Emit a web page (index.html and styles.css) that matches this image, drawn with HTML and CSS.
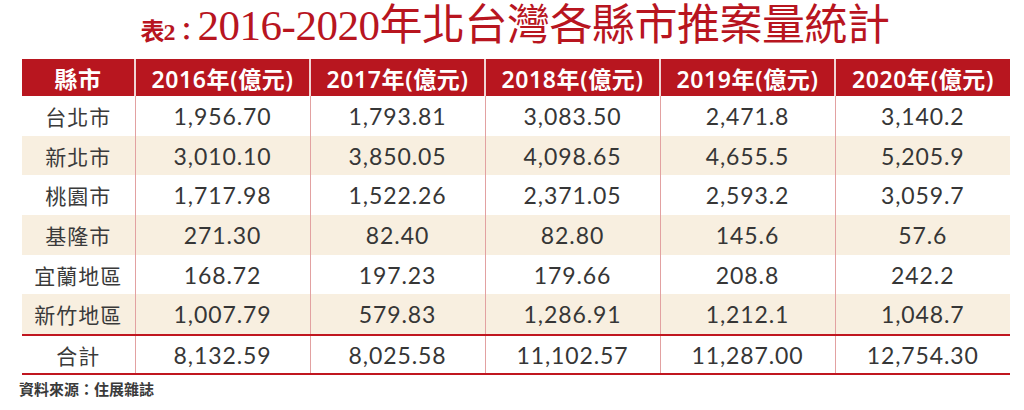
FILE: index.html
```html
<!DOCTYPE html>
<html lang="zh-Hant">
<head>
<meta charset="utf-8">
<title>表2：2016-2020年北台灣各縣市推案量統計</title>
<link rel="stylesheet" href="styles.css">
</head>
<body>
<h1 class="title"><span class="title-tag">表2：</span><span class="title-main">2016-2020年北台灣各縣市推案量統計</span></h1>
<table class="stats">
  <thead>
    <tr>
      <th class="col-name">縣市</th>
      <th>2016年(億元)</th>
      <th>2017年(億元)</th>
      <th>2018年(億元)</th>
      <th>2019年(億元)</th>
      <th>2020年(億元)</th>
    </tr>
  </thead>
  <tbody>
    <tr><td class="name">台北市</td><td>1,956.70</td><td>1,793.81</td><td>3,083.50</td><td>2,471.8</td><td>3,140.2</td></tr>
    <tr class="alt"><td class="name">新北市</td><td>3,010.10</td><td>3,850.05</td><td>4,098.65</td><td>4,655.5</td><td>5,205.9</td></tr>
    <tr><td class="name">桃園市</td><td>1,717.98</td><td>1,522.26</td><td>2,371.05</td><td>2,593.2</td><td>3,059.7</td></tr>
    <tr class="alt"><td class="name">基隆市</td><td>271.30</td><td>82.40</td><td>82.80</td><td>145.6</td><td>57.6</td></tr>
    <tr><td class="name">宜蘭地區</td><td>168.72</td><td>197.23</td><td>179.66</td><td>208.8</td><td>242.2</td></tr>
    <tr class="alt"><td class="name">新竹地區</td><td>1,007.79</td><td>579.83</td><td>1,286.91</td><td>1,212.1</td><td>1,048.7</td></tr>
  </tbody>
  <tfoot>
    <tr><td class="name">合計</td><td>8,132.59</td><td>8,025.58</td><td>11,102.57</td><td>11,287.00</td><td>12,754.30</td></tr>
  </tfoot>
</table>
<p class="source">資料來源：住展雜誌</p>
</body>
</html>
```

FILE: styles.css
```css
html, body {
  margin: 0;
  padding: 0;
  background: #ffffff;
}

body {
  width: 1024px;
  height: 410px;
  overflow: hidden;
  font-family: "Noto Sans", "Noto Sans CJK TC", sans-serif;
  color: #333333;
}

.title {
  margin: 0;
  height: 59px;
  display: flex;
  justify-content: center;
  align-items: baseline;
  padding-left: 6px;
  box-sizing: border-box;
  color: #b8151f;
  font-family: "Liberation Serif", "Noto Sans CJK TC", serif;
  font-weight: normal;
  line-height: 52px;
}

.title-tag {
  font-size: 24px;
  font-weight: bold;
  letter-spacing: -1px;
}

.title-main {
  font-size: 43px;
  letter-spacing: -0.5px;
}

.stats {
  margin-left: 22px;
  width: 988px;
  border-collapse: collapse;
  table-layout: fixed;
}

.stats th,
.stats td {
  padding: 0;
  text-align: center;
  white-space: nowrap;
}

.stats th {
  height: 37px;
  background: #b8161f;
  color: #ffffff;
  font-size: 23px;
  font-weight: 600;
  border-left: 2px solid #f1d4d4;
  letter-spacing: 0.6px;
}

.stats th.col-name {
  width: 112px;
  border-left: none;
}

.stats td {
  font-size: 23px;
  font-family: "Lato", "Noto Sans CJK TC", sans-serif;
  letter-spacing: 0.9px;
  border-left: 1px solid #e2a1a1;
  color: #363636;
}

.stats td.name {
  border-left: none;
  font-family: "Noto Sans CJK TC", sans-serif;
  font-size: 21px;
  letter-spacing: 1px;
  color: #3a3a3a;
}

.stats tbody td {
  height: 39.7px;
}

.stats tbody tr.alt td {
  background: #f8efe0;
}

.stats tfoot td {
  height: 37px;
  border-top: 2px solid #c0161f;
  border-bottom: 2px solid #c0161f;
}

.stats tfoot td:first-child {
  border-left: none;
}

.source {
  margin: 5px 0 0 19px;
  font-family: "Noto Sans CJK TC", sans-serif;
  font-size: 15px;
  font-weight: bold;
  color: #3a3a3a;
  line-height: 18px;
}
```
